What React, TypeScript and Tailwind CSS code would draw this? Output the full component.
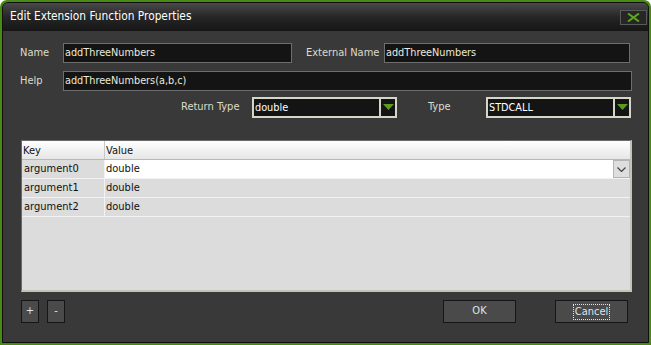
import React from "react";

const font = { fontFamily: '"DejaVu Sans Condensed", "Liberation Sans", sans-serif' };

function TextBox({ value, className }: { value: string; className: string }) {
  return (
    <div
      className={`h-[20px] bg-[#141414] border border-[#6e6e6e] text-[#ecebdc] text-[10.8px] leading-[18px] pl-[1px] ${className}`}
    >
      {value}
    </div>
  );
}

function Combo({ value }: { value: string }) {
  return (
    <div className="w-[145px] h-[21px] border-2 border-[#d6d6c6] bg-[#141414] flex">
      <div className="flex-1 text-white text-[10.8px] leading-[17px] pl-[1px]">{value}</div>
      <div className="w-[16px] border-l-2 border-[#d6d6c6] flex items-center justify-center">
        <svg width="11" height="7" viewBox="0 0 11 7">
          <polygon points="0,0 11,0 5.5,6" fill="#5c9c1c" />
        </svg>
      </div>
    </div>
  );
}

function DarkButton({ children, className }: { children: React.ReactNode; className: string }) {
  return (
    <div
      className={`h-[23px] bg-[#4a4a4a] border border-[#161616] flex items-center justify-center text-[#dde4ec] text-[11px] ${className}`}
    >
      {children}
    </div>
  );
}

const rows = ["argument0", "argument1", "argument2"];

export default function App() {
  return (
    <div className="w-[651px] h-[345px] bg-[#488a12] rounded-t-[7px] p-[2px]" style={font}>
      <div className="w-full h-full bg-[#393939] border border-[#101010] rounded-t-[6px] flex flex-col overflow-hidden">
        {/* Title bar */}
        <div className="h-[28px] bg-gradient-to-b from-[#4a4a4a] via-[#262626] to-[#161616] flex items-center justify-between pl-[7px] pr-[1px] shrink-0">
          <span className="text-white text-[11.8px] leading-none">Edit Extension Function Properties</span>
          <div className="w-[27px] h-[15px] bg-[#262626] border border-[#5a5a5a] flex items-center justify-center">
            <svg width="13" height="9" viewBox="0 0 13 9">
              <path d="M1 0.5 L12 8.5 M12 0.5 L1 8.5" stroke="#5ea51e" strokeWidth="2" />
            </svg>
          </div>
        </div>

        {/* Body */}
        <div className="flex-1 flex flex-col pl-[17px] pr-[16px] text-[#dcdccc] text-[11px]">
          <div className="flex items-center mt-[12px] h-[20px]">
            <span className="w-[43px]">Name</span>
            <TextBox value="addThreeNumbers" className="w-[229px]" />
            <span className="ml-[14px] w-[78px]">External Name</span>
            <TextBox value="addThreeNumbers" className="w-[246px]" />
          </div>
          <div className="flex items-center mt-[8px] h-[19px]">
            <span className="w-[43px] pt-[2px]">Help</span>
            <TextBox value="addThreeNumbers(a,b,c)" className="flex-1 h-[19px] leading-[17px]" />
          </div>
          <div className="flex items-center mt-[7px] h-[21px]">
            <span className="ml-[161px] w-[71px]">Return Type</span>
            <Combo value="double" />
            <span className="ml-[31px] w-[58px]">Type</span>
            <Combo value="STDCALL" />
          </div>

          {/* Grid */}
          <div className="mt-[22px] h-[152px] ml-[1px] bg-[#dcdcdc] border-t border-l border-[#6a6a6a] border-r-2 border-b-2 border-r-[#c4c4b4] border-b-[#c4c4b4] text-[#111] text-[11px]">
            <div className="flex h-[19px] bg-gradient-to-b from-white to-[#e6e6e6] border-b border-[#b8b8b8]">
              <div className="w-[83px] pl-[1px] leading-[19px] border-r border-[#c8c8c8]">Key</div>
              <div className="flex-1 pl-[1px] leading-[19px]">Value</div>
            </div>
            {rows.map((r, i) => (
              <div key={r} className="flex h-[19px] border-b border-[#f2f2f2]">
                <div className="w-[83px] pl-[2px] leading-[18px] border-r border-[#f2f2f2]">{r}</div>
                {i === 0 ? (
                  <div className="flex-1 bg-white flex items-center">
                    <span className="flex-1 pl-[1px]">double</span>
                    <div className="w-[17px] h-[18px] bg-[#dedede] border border-[#b4b4b4] flex items-center justify-center">
                      <svg width="9" height="5" viewBox="0 0 9 5">
                        <path d="M0.5 0.5 L4.5 4.5 L8.5 0.5" stroke="#444" strokeWidth="1.2" fill="none" />
                      </svg>
                    </div>
                  </div>
                ) : (
                  <div className="flex-1 pl-[1px] leading-[18px]">double</div>
                )}
              </div>
            ))}
          </div>

          {/* Buttons */}
          <div className="flex items-center mt-[8px]">
            <DarkButton className="w-[18px] ml-[1px]">+</DarkButton>
            <DarkButton className="w-[18px] ml-[8px]">-</DarkButton>
            <DarkButton className="w-[73px] ml-[378px]">OK</DarkButton>
            <DarkButton className="w-[73px] ml-[39px]">
              <span className="border border-dotted border-[#dde4ec] px-[1px] leading-[14px]">Cancel</span>
            </DarkButton>
          </div>
        </div>
      </div>
    </div>
  );
}
